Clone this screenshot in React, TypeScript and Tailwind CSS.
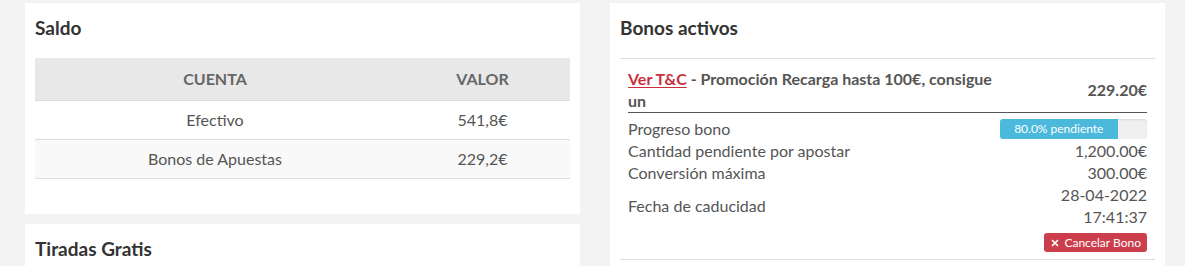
import { X } from 'lucide-react'

const saldoRows = [
	{ cuenta: 'Efectivo', valor: '541,8€' },
	{ cuenta: 'Bonos de Apuestas', valor: '229,2€' },
]

const bonoRows = [
	{ label: 'Cantidad pendiente por apostar', value: '1,200.00€' },
	{ label: 'Conversión máxima', value: '300.00€' },
]

function Card({ title, children, className = '' }: { title: string; children?: React.ReactNode; className?: string }) {
	return (
		<section className={`bg-white px-[10px] pt-[10px] ${className}`}>
			<h2 className="text-[19px] leading-[30px] font-bold text-[#333] mb-[15px]">{title}</h2>
			{children}
		</section>
	)
}

export default function App() {
	const progress = 80

	return (
		<main
			className="min-h-[266px] bg-[#f3f3f3] pl-[25px] pr-[20px] pt-[3px] flex gap-[30px] text-[#555]"
			style={{ fontFamily: 'Lato, "Open Sans", sans-serif' }}
		>
			{/* Left column */}
			<div className="w-[555px] flex flex-col gap-[10px]">
				<Card title="Saldo" className="pb-[35px]">
					<table className="w-full border-collapse text-[16px]">
						<thead>
							<tr className="bg-[#e8e8e8] h-[42px] border-b border-[#ddd]">
								<th className="w-[360px] font-bold text-[#666] text-center">CUENTA</th>
								<th className="font-bold text-[#666] text-center">VALOR</th>
							</tr>
						</thead>
						<tbody>
							{saldoRows.map((row, i) => (
								<tr key={row.cuenta} className={`h-[39px] border-b border-[#ddd] ${i % 2 === 1 ? 'bg-[#f9f9f9]' : 'bg-white'}`}>
									<td className="text-center">{row.cuenta}</td>
									<td className="text-center">{row.valor}</td>
								</tr>
							))}
						</tbody>
					</table>
				</Card>
				<Card title="Tiradas Gratis" className="flex-1" />
			</div>

			{/* Right column */}
			<div className="w-[555px]">
				<Card title="Bonos activos" className="pb-[10px]">
					<div className="border-t border-b border-[#ddd] px-[8px] pt-[9px] pb-[7px] text-[16px]">
						<div className="flex items-center border-b border-[#555] leading-[22px]">
							<div className="w-[372px] font-bold">
								<a href="#" className="text-[#c9303e] underline underline-offset-2">Ver T&amp;C</a>
								{' '}- Promoción Recarga hasta 100€, consigue un
							</div>
							<div className="flex-1 text-right font-bold">229.20€</div>
						</div>

						<div className="pt-[5px] leading-[22px]">
							<div className="flex items-center justify-between h-[22px]">
								<span>Progreso bono</span>
								<div className="w-[147px] h-[20px] rounded-[3px] bg-[#f0f0f0] overflow-hidden shadow-[inset_0_1px_2px_rgba(0,0,0,0.1)]">
									<div
										className="h-full bg-[#4bb9dc] text-white text-[12px] leading-[20px] text-center"
										style={{ width: `${progress}%` }}
									>
										80.0% pendiente
									</div>
								</div>
							</div>
							{bonoRows.map((row) => (
								<div key={row.label} className="flex items-center justify-between">
									<span>{row.label}</span>
									<span>{row.value}</span>
								</div>
							))}
							<div className="flex items-center justify-between">
								<span>Fecha de caducidad</span>
								<span className="text-right">
									28-04-2022
									<br />
									17:41:37
								</span>
							</div>
							<div className="flex justify-end mt-[5px]">
								<button
									type="button"
									className="flex items-center gap-[4px] h-[19px] px-[6px] rounded-[3px] bg-[#cc3e4c] text-white text-[12px] leading-none"
								>
									<X size={10} strokeWidth={4} />
									Cancelar Bono
								</button>
							</div>
						</div>
					</div>
				</Card>
			</div>
		</main>
	)
}
